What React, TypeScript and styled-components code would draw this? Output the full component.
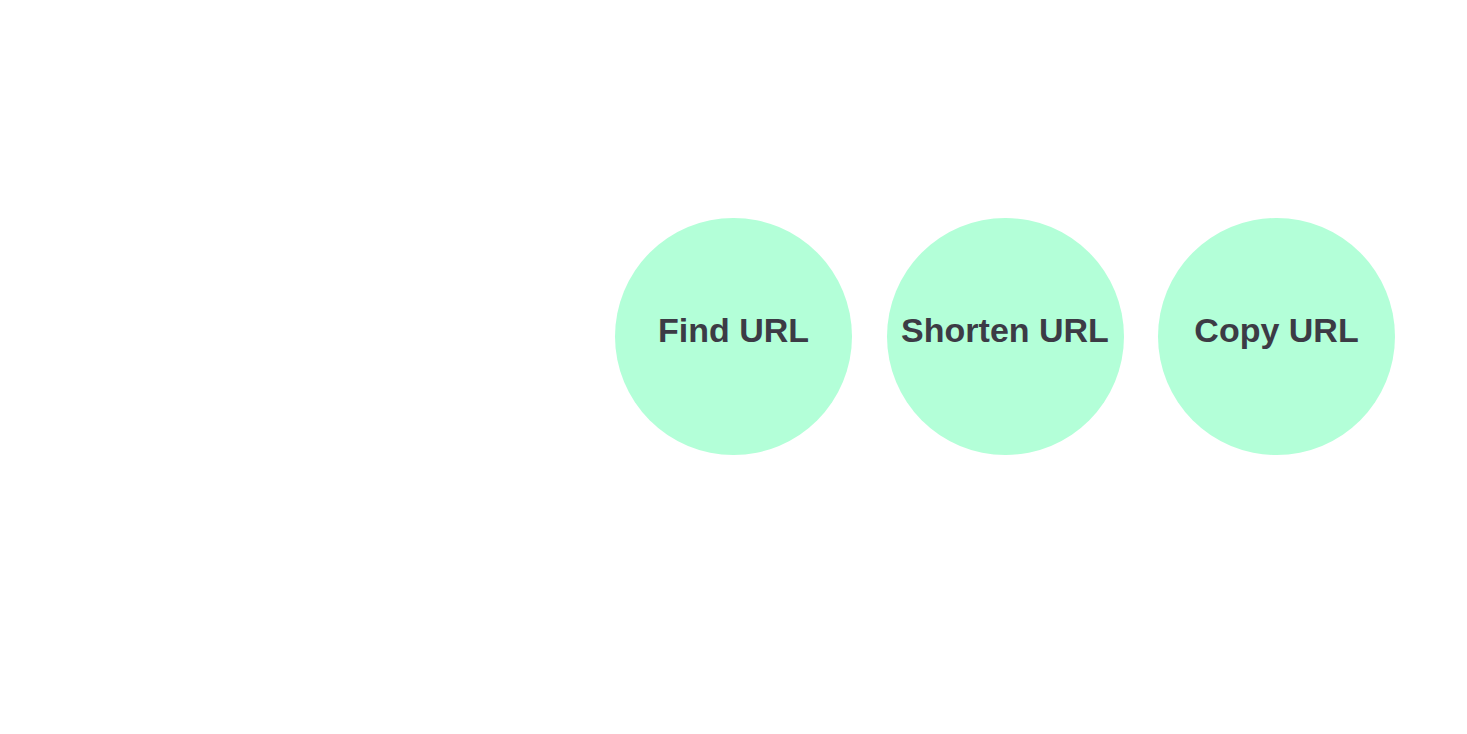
import React from "react";
import styled, { createGlobalStyle } from "styled-components";

const GlobalStyle = createGlobalStyle`
  body {
    margin: 0;
    background: #ffffff;
    font-family: "Liberation Sans", Arial, sans-serif;
  }
`;

const actions = ["Find URL", "Shorten URL", "Copy URL"];

const App = () => {
  return (
    <Page>
      <GlobalStyle />
      <Actions>
        {actions.map((label) => (
          <Bubble key={label} type="button">
            {label}
          </Bubble>
        ))}
      </Actions>
    </Page>
  );
};

export default App;

const Page = styled.div`
  min-height: 734px;
  display: flex;
  justify-content: flex-end;
  padding: 217.5px 72px 0 0;
  box-sizing: border-box;
`;

const Actions = styled.div`
  display: flex;
  gap: 34.5px;
  height: 237.5px;
`;

const Bubble = styled.button`
  width: 237px;
  height: 237.5px;
  border-radius: 50%;
  border: none;
  background-color: #b3ffd8;
  color: #3c3b45;
  font-family: "Liberation Sans", Arial, sans-serif;
  font-size: 34px;
  font-weight: 700;
  display: flex;
  align-items: center;
  justify-content: center;
  padding: 0 0 11px 0;
  cursor: pointer;
`;
